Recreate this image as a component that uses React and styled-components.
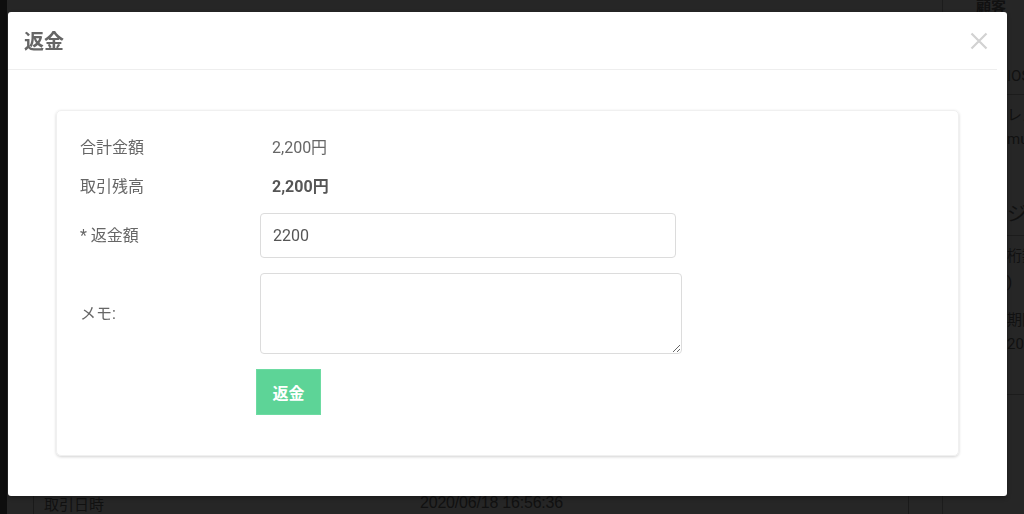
import React from 'react'
import styled, { createGlobalStyle } from 'styled-components'

const GlobalStyle = createGlobalStyle`
  html, body {
    margin: 0;
    padding: 0;
    background: #262626;
    overflow: hidden;
  }
  body {
    font-family: "Roboto", "Noto Sans CJK JP", sans-serif;
  }
  * { box-sizing: border-box; }
`

function App() {
  return (
    <>
      <GlobalStyle />
      {/* 後ろのページ (暗くなっている) */}
      <Page>
        <Sidebar />
        <Main>
          <Table>
            <TableRow>
              <TableHead>取引日時</TableHead>
              <TableCell>2020/06/18 16:56:36</TableCell>
            </TableRow>
          </Table>
        </Main>
        <Aside>
          <AsideTitle>顧客</AsideTitle>
          <AsideBody>
            <AsideText top="52px">IOS</AsideText>
            <AsideLine />
            <AsideText top="10px">レスポンス</AsideText>
            <AsideText top="4px">mumu</AsideText>
            <AsideHeading>ジ</AsideHeading>
            <AsideLine />
            <AsideText top="10px">桁数</AsideText>
            <AsideText top="6px">)</AsideText>
            <AsideText top="18px">期限</AsideText>
            <AsideText top="4px">2020</AsideText>
            <AsideLine top="40px" />
          </AsideBody>
        </Aside>
      </Page>

      {/* モーダル */}
      <Backdrop>
        <Modal>
          <Header>
            <Title>返金</Title>
            <Close aria-label="close">
              <svg width="18" height="18" viewBox="0 0 18 18">
                <path d="M1.5 1.5 L16.5 16.5 M16.5 1.5 L1.5 16.5" stroke="#d2d2d2" strokeWidth="2.2" fill="none" />
              </svg>
            </Close>
          </Header>
          <Body>
            <Card>
              <Field>
                <Label>合計金額</Label>
                <Value>2,200円</Value>
              </Field>
              <Field>
                <Label>取引残高</Label>
                <Value bold>2,200円</Value>
              </Field>
              <Field>
                <Label>* 返金額</Label>
                <Input defaultValue="2200" />
              </Field>
              <Field>
                <Label>メモ:</Label>
                <Memo />
              </Field>
              <Field>
                <span />
                <SubmitBtn>返金</SubmitBtn>
              </Field>
            </Card>
          </Body>
        </Modal>
      </Backdrop>
    </>
  )
}

const Page = styled.div`
  display: flex;
  width: 1024px;
  height: 514px;
  color: #111;
`
const Sidebar = styled.div`
  width: 7px;
  background: #0e0e0e;
`
const Main = styled.div`
  flex: 1;
  display: flex;
  flex-direction: column;
  justify-content: flex-end;
  padding-left: 26px;
  padding-right: 28px;
`
const Table = styled.div`
  border-left: 1px solid #1a1a1a;
  border-right: 1px solid #1a1a1a;
  width: 876px;
`
const TableRow = styled.div`
  display: flex;
  align-items: center;
  height: 26px;
  padding-top: 4px;
  font-size: 15px;
`
const TableHead = styled.div`
  width: 386px;
  padding-left: 10px;
`
const TableCell = styled.div`
  font-family: "Liberation Sans", sans-serif;
  font-size: 16px;
  letter-spacing: -0.2px;
`
const Aside = styled.div`
  width: 82px;
  border-left: 1px solid #1c1c1c;
  overflow: hidden;
`
const AsideTitle = styled.div`
  font-weight: bold;
  font-size: 15px;
  padding-left: 33px;
  line-height: 14px;
  white-space: nowrap;
`
const AsideBody = styled.div`
  display: flex;
  flex-direction: column;
  padding-left: 64px;
  font-size: 15px;
`
const AsideText = styled.div`
  margin-top: ${(props) => props.top || '0'};
  white-space: nowrap;
  line-height: 20px;
`
const AsideHeading = styled.div`
  margin-top: 52px;
  font-size: 20px;
  line-height: 26px;
  white-space: nowrap;
`
const AsideLine = styled.div`
  margin-top: ${(props) => props.top || '8px'};
  margin-left: -64px;
  height: 1px;
  background: #1c1c1c;
`

const Backdrop = styled.div`
  position: fixed;
  inset: 0;
  padding: 12px 0 0 8px;
`
const Modal = styled.div`
  width: 999px;
  height: 484px;
  background: #fff;
  border-radius: 3px;
  display: flex;
  flex-direction: column;
  box-shadow: 0 2px 4px rgba(0, 0, 0, 0.3);
`
const Header = styled.div`
  height: 58px;
  margin-right: 10px;
  padding: 0 9px 0 16px;
  display: flex;
  align-items: center;
  justify-content: space-between;
  border-bottom: 1px solid #eeeeee;
`
const Title = styled.h2`
  margin: 0;
  font-family: "Noto Sans CJK JP", sans-serif;
  font-size: 20px;
  font-weight: bold;
  color: #666;
`
const Close = styled.button`
  display: flex;
  border: none;
  background: none;
  padding: 0;
  margin-top: 1px;
  cursor: pointer;
`
const Body = styled.div`
  padding: 40px 48px;
`
const Card = styled.div`
  border: 1px solid #f0f0f0;
  border-radius: 5px;
  box-shadow: 0 1px 3px rgba(0, 0, 0, 0.18);
  padding: 25px 23px 40px;
  display: flex;
  flex-direction: column;
  gap: 15px;
`
const Field = styled.div`
  display: grid;
  grid-template-columns: 180px 1fr;
  align-items: center;
`
const Label = styled.div`
  font-size: 16px;
  line-height: 24px;
  color: #666;
`
const Value = styled.div`
  padding-left: 12px;
  font-size: 16px;
  line-height: 24px;
  color: ${(props) => (props.bold ? '#555' : '#666')};
  font-weight: ${(props) => (props.bold ? 'bold' : 'normal')};
`
const Input = styled.input`
  width: 416px;
  height: 45px;
  margin-top: -1px;
  padding: 0 12px;
  border: 1px solid #dcdcdc;
  border-radius: 4px;
  font-family: "Roboto", sans-serif;
  font-size: 16px;
  color: #555;
  outline: none;
`
const Memo = styled.textarea`
  width: 422px;
  height: 81px;
  padding: 8px 12px;
  border: 1px solid #dcdcdc;
  border-radius: 4px;
  font-family: "Roboto", sans-serif;
  font-size: 16px;
  display: block;
  outline: none;
`
const SubmitBtn = styled.button`
  justify-self: start;
  width: 65px;
  height: 46px;
  margin-left: -4px;
  border: 1px solid #6ddba2;
  background: #5dd497;
  color: #fff;
  font-family: "Noto Sans CJK JP", sans-serif;
  font-size: 16px;
  font-weight: bold;
  cursor: pointer;
`

export default App
